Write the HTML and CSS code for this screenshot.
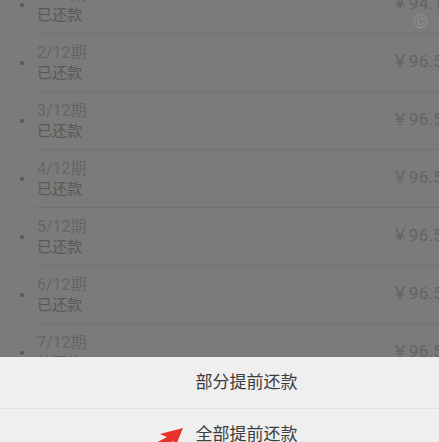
FILE: index.html
```html
<!DOCTYPE html>
<html lang="zh-CN">
<head>
    <meta charset="UTF-8">
    <meta name="viewport" content="width=device-width, initial-scale=1.0">
    <title>还款计划</title>
    <link rel="stylesheet" href="styles.css">
</head>
<body>

<div class="page">
    <ul class="plan-list">
        <li class="plan-row">
            <span class="dot"></span>
            <div class="plan-body">
                <div class="plan-text">
                    <p class="period">1/12期</p>
                    <p class="status">已还款</p>
                </div>
                <span class="amount">￥94.12</span>
            </div>
        </li>
        <li class="plan-row">
            <span class="dot"></span>
            <div class="plan-body">
                <div class="plan-text">
                    <p class="period">2/12期</p>
                    <p class="status">已还款</p>
                </div>
                <span class="amount">￥96.50</span>
            </div>
        </li>
        <li class="plan-row">
            <span class="dot"></span>
            <div class="plan-body">
                <div class="plan-text">
                    <p class="period">3/12期</p>
                    <p class="status">已还款</p>
                </div>
                <span class="amount">￥96.50</span>
            </div>
        </li>
        <li class="plan-row">
            <span class="dot"></span>
            <div class="plan-body">
                <div class="plan-text">
                    <p class="period">4/12期</p>
                    <p class="status">已还款</p>
                </div>
                <span class="amount">￥96.50</span>
            </div>
        </li>
        <li class="plan-row">
            <span class="dot"></span>
            <div class="plan-body">
                <div class="plan-text">
                    <p class="period">5/12期</p>
                    <p class="status">已还款</p>
                </div>
                <span class="amount">￥96.50</span>
            </div>
        </li>
        <li class="plan-row">
            <span class="dot"></span>
            <div class="plan-body">
                <div class="plan-text">
                    <p class="period">6/12期</p>
                    <p class="status">已还款</p>
                </div>
                <span class="amount">￥96.50</span>
            </div>
        </li>
        <li class="plan-row">
            <span class="dot"></span>
            <div class="plan-body">
                <div class="plan-text">
                    <p class="period">7/12期</p>
                    <p class="status">待还款</p>
                </div>
                <span class="amount">￥96.50</span>
            </div>
        </li>
    </ul>

    <span class="mark">©</span>

    <!-- bottom action sheet -->
    <div class="sheet">
        <div class="sheet-item">部分提前还款</div>
        <div class="sheet-item">全部提前还款</div>
    </div>

    <svg class="pointer" width="40" height="24" viewBox="0 0 40 24">
        <polygon points="33,2 10,8 17,11 2,19 8,24 23,15 26,19" fill="#e8322b"/>
    </svg>
</div>

</body>
</html>
```

FILE: styles.css
```css
* {
    margin: 0;
    padding: 0;
    box-sizing: border-box;
}

html, body {
    height: 100%;
    overflow: hidden;
}

body {
    background-color: #7b7b7b;
    font-family: 'Roboto', 'Noto Sans CJK SC', sans-serif;
}

.page {
    position: relative;
    width: 493px;
    height: 442px;
    overflow: hidden;
}

.plan-list {
    list-style: none;
    margin-top: -24px;
}

.plan-row {
    display: flex;
    align-items: center;
    height: 58px;
}

.dot {
    width: 4px;
    height: 4px;
    margin-left: 20px;
    margin-right: 11px;
    border-radius: 50%;
    background-color: #575757;
}

.plan-body {
    flex: 1;
    height: 100%;
    display: flex;
    align-items: center;
    justify-content: space-between;
    padding-left: 2px;
    padding-right: 40px;
    border-bottom: 1px solid #727272;
}

.plan-text {
    font-size: 15px;
    line-height: 20px;
}

.period {
    font-size: 16px;
    color: #666;
}

.status {
    color: #595959;
}

.amount {
    margin-bottom: 6px;
    font-size: 17px;
    letter-spacing: 0.3px;
    color: #636363;
}

.mark {
    position: absolute;
    top: 10px;
    left: 413px;
    font-size: 19px;
    font-weight: 300;
    color: #959595;
}

.sheet {
    position: absolute;
    top: 357px;
    left: 0;
    right: 0;
    background-color: #efefef;
}

.sheet-item {
    height: 52px;
    line-height: 51px;
    text-align: center;
    font-size: 17px;
    color: #3d3d3d;
    border-bottom: 1px solid #e3e3e3;
}

.pointer {
    position: absolute;
    top: 426px;
    left: 150px;
}
```
